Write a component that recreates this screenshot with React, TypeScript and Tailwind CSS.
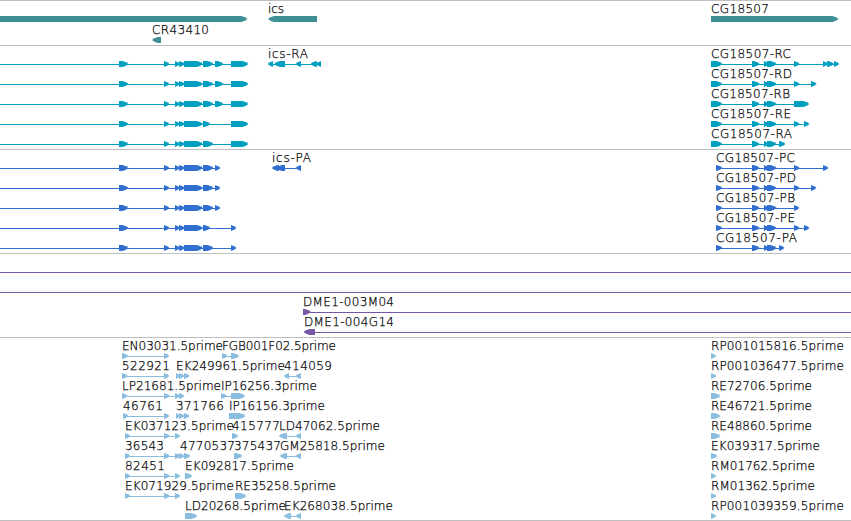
import React from "react";

type Span = [number, number];
type Dir = "fwd" | "rev";

interface Feature {
  label?: string;
  // Left and right edge of the label
  at?: Span;
  parts: Span[];
  // Connector range when it reaches past the parts
  line?: Span;
  dir?: Dir;
}

interface TrackData {
  color: string;
  rowClass: string;
  className: string;
  rows: Feature[][];
}

const lead: Span[] = [[119, 128.5], [164, 169.5], [175, 180], [179, 185], [184, 203]];
const rnaHead: Span[] = [[711, 722.5], [752, 759.7], [764, 769], [767, 776.7]];
const protHead: Span[] = [[716, 722.5], [752, 759.7], [764, 769], [767, 776.7]];

const left = (...parts: Span[]): Feature => ({
  parts: [...lead, ...parts],
  line: [0, parts[parts.length - 1][0]],
});
const rna = (label: string, end: number, ...parts: Span[]): Feature => ({
  label,
  at: [711, end],
  parts: [...rnaHead, ...parts],
});
const prot = (label: string, end: number, ...parts: Span[]): Feature => ({
  label,
  at: [716, end],
  parts: [...protHead, ...parts],
});
const est = (label: string, start: number, end: number, ...parts: Span[]): Feature => ({
  label,
  at: [start, end],
  parts,
});
const rev = (feature: Feature): Feature => ({ ...feature, dir: "rev" });

const tracks: TrackData[] = [
  {
    color: "#3f8f96",
    rowClass: "h-[21px]",
    className: "pb-0.5",
    rows: [
      [
        { parts: [[-10, 247.5]] },
        rev(est("ics", 268, 284, [268, 317])),
        est("CG18507", 711, 769, [711, 838.5]),
      ],
      [rev(est("CR43410", 152, 209, [152, 161]))],
    ],
  },
  {
    color: "#009fbf",
    rowClass: "h-5",
    className: "pb-[3px]",
    rows: [
      [
        left([203, 213.5], [215, 223.5], [231, 248.5]),
        rev(est("ics-RA", 268, 308, [267.7, 273], [274, 285], [295.5, 301], [310.5, 317], [316, 321])),
        rna("CG18507-RC", 791, [794, 799.7], [823, 828], [827, 834], [834, 839.3]),
      ],
      [
        left([203, 213.5], [215, 223.5], [231, 248.5]),
        rna("CG18507-RD", 792, [794, 799.7], [811, 816.7]),
      ],
      [
        left([203, 213.5], [215, 223.5], [231, 248.5]),
        rna("CG18507-RB", 790, [794, 809.3]),
      ],
      [
        left([203, 210.5], [231, 248.5]),
        rna("CG18507-RE", 791, [794, 799.7], [804, 809.5]),
      ],
      [left([203, 213.5], [231, 248.5]), rna("CG18507-RA", 792, [779, 785.5])],
    ],
  },
  {
    color: "#306fcf",
    rowClass: "h-5",
    className: "pb-[3px]",
    rows: [
      [
        left([203, 213.5], [215, 220.5]),
        rev(est("ics-PA", 272, 311, [271.7, 279], [276, 285], [295.5, 301])),
        prot("CG18507-PC", 795, [794, 799.7], [823, 828.5]),
      ],
      [left([203, 213.5], [215, 220.5]), prot("CG18507-PD", 796, [794, 799.7], [811, 816.5])],
      [left([203, 213.5], [215, 220.5]), prot("CG18507-PB", 795, [794, 799.5])],
      [left([203, 210.5], [231, 236.5]), prot("CG18507-PE", 795, [794, 799.7], [804, 809.5])],
      [left([203, 213.5], [231, 236.5]), prot("CG18507-PA", 797, [779, 784.5])],
    ],
  },
  {
    color: "#7759a8",
    rowClass: "h-5",
    className: "pb-[3px]",
    rows: [
      [{ parts: [], line: [0, 851] }],
      [{ parts: [], line: [0, 851] }],
      [{ ...est("DME1-003M04", 303, 394, [303, 311]), line: [303, 851] }],
      [{ ...rev(est("DME1-004G14", 304, 394, [303.5, 315])), line: [310, 851] }],
    ],
  },
  {
    color: "#8abddf",
    rowClass: "h-5",
    className: "border-b pb-0.5",
    rows: [
      [
        est("EN03031.5prime", 122, 223, [122, 128.5], [164, 169.5]),
        est("FGB001F02.5prime", 222, 336, [222, 227.7], [231, 239.3]),
        est("RP001015816.5prime", 711, 844, [711, 716.5]),
      ],
      [
        est("522921", 122, 170, [122, 128], [164, 169.5]),
        est("EK249961.5prime", 176, 285, [176, 180], [179, 184.5], [184, 189.7]),
        rev(est("414059", 284, 332, [283.7, 289], [295.5, 301])),
        est("RP001036477.5prime", 711, 844, [711, 716.5]),
      ],
      [
        est("LP21681.5prime", 122, 221, [122, 127.7], [164, 170], [175, 180], [179, 184.5]),
        est("IP16256.3prime", 221, 317, [221, 227], [231, 245.3]),
        est("RE72706.5prime", 711, 812, [711, 720.5]),
      ],
      [
        est("46761", 123, 163, [123, 128.7], [164, 169.5]),
        est("371766", 176, 224, [176, 180], [179, 184.5], [184, 189.7]),
        est("IP16156.3prime", 229, 325, [229, 245.5]),
        est("RE46721.5prime", 711, 812, [711, 720.5]),
      ],
      [
        est("EK037123.5prime", 125, 234, [125, 130.5], [164, 170], [175, 180.5]),
        est("415777", 232, 280, [232, 238.5]),
        rev(est("LD47062.5prime", 279, 380, [278.7, 287], [295.5, 301])),
        est("RE48860.5prime", 711, 812, [711, 720.5]),
      ],
      [
        est("36543", 125, 164, [125, 130.5], [164, 170], [175, 180.5]),
        est("4770537", 180, 235, [179, 184.5], [184, 190.5]),
        est("375437", 234, 281, [234, 242.5]),
        rev(est("GM25818.5prime", 280, 385, [279.7, 287], [295.5, 301])),
        est("EK039317.5prime", 711, 820, [711, 717.5]),
      ],
      [
        est("82451", 125, 165, [125, 130.5], [164, 170], [175, 180.5]),
        est("EK092817.5prime", 185, 294, [185, 192.5]),
        est("RM01762.5prime", 711, 815, [711, 716.5]),
      ],
      [
        est("EK071929.5prime", 125, 234, [125, 130.5], [164, 170], [175, 180.5]),
        est("RE35258.5prime", 235, 336, [235, 246.5]),
        est("RM01362.5prime", 711, 815, [711, 716.5]),
      ],
      [
        est("LD20268.5prime", 185, 286, [185, 197.5]),
        rev(est("EK268038.5prime", 284, 393, [283.7, 291], [295.5, 301])),
        est("RP001039359.5prime", 711, 844, [711, 716.5]),
      ],
    ],
  },
];

// Box with a rounded taper at one end, pointing along the strand
function arrow([a, b]: Span, dir: Dir) {
  const head = Math.min(6, b - a);
  return dir === "fwd"
    ? `M${a} 15H${b - head}Q${b - 2} 16.2 ${b} 18Q${b - 2} 19.8 ${b - head} 21H${a}Z`
    : `M${b} 15H${a + head}Q${a + 2} 16.2 ${a} 18Q${a + 2} 19.8 ${a + head} 21H${b}Z`;
}

function FeatureGlyph({ feature, color }: { feature: Feature; color: string }) {
  const { label, at, parts, dir = "fwd" } = feature;
  const line = feature.line ?? [parts[0][0] + 3, parts[parts.length - 1][0] + 1];
  const connected = feature.line !== undefined || parts.length > 1;
  return (
    <g fill={color}>
      {connected && <rect x={line[0]} y={18} width={line[1] - line[0]} height={1} />}
      {parts.map((part, i) => (
        <path key={i} d={arrow(part, dir)} />
      ))}
      {label && at && (
        <text
          x={at[0]}
          y={12}
          textLength={at[1] - at[0]}
          className="fill-black stroke-black stroke-[0.25px]"
        >
          {label}
        </text>
      )}
    </g>
  );
}

function Track({ track }: { track: TrackData }) {
  return (
    <section className={`border-t border-[#bfbfbf] ${track.className}`}>
      {track.rows.map((row, i) => (
        <div key={i} className={track.rowClass}>
          <svg width={851} height={20} className="block overflow-visible">
            {row.map((feature, j) => (
              <FeatureGlyph key={j} feature={feature} color={track.color} />
            ))}
          </svg>
        </div>
      ))}
    </section>
  );
}

export default function App() {
  return (
    <main className="flex h-[521px] w-[851px] flex-col overflow-hidden bg-white font-['DejaVu_Sans',sans-serif] text-[12px] font-extralight">
      {tracks.map((track, i) => (
        <Track key={i} track={track} />
      ))}
    </main>
  );
}
